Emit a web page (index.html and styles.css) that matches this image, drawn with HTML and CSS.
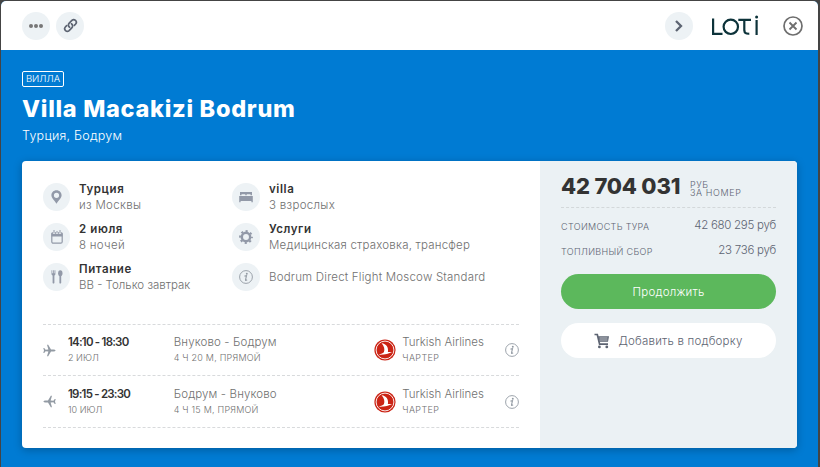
FILE: index.html
```
<!DOCTYPE html>
<html lang="ru">
  <head>
    <meta charset="utf-8" />
    <title>Villa Macakizi Bodrum</title>
    <link rel="stylesheet" href="styles.css">
  </head>

  <body>
    <svg class="sprite">
      <symbol id="info" viewBox="0 0 14 14">
        <circle cx="7" cy="7" r="6.4" fill="none" stroke="currentColor" stroke-width="0.9" />
        <circle cx="7.8" cy="3.7" r="0.95" fill="currentColor" />
        <path d="M5.5 6.1L7.5 5.7L6.5 10Q6.4 10.8 8.1 9.7" fill="none" stroke="currentColor" stroke-width="1.1" />
      </symbol>
      <symbol id="turkish" viewBox="0 0 22 22">
        <circle cx="11" cy="11" r="10.6" fill="#cb2415" />
        <circle cx="11" cy="11" r="8.9" fill="none" stroke="#fff" stroke-width="0.9" />
        <path d="M7.6 4.2C12.2 4.6 14.8 8.4 13.9 12.9L18.1 12.9C14.8 14.6 10.4 15.9 4.3 15.6C7.4 14.9 9.3 14 9.9 13.2C11 10.5 10.2 7 7.6 4.2Z" fill="#fff" />
      </symbol>
      <symbol id="plane" viewBox="0 0 13 13">
        <path d="M12.6 6.5Q12.4 5.6 10.5 5.6H8L5.2 0.8H4L5.4 5.6L2.6 5.7L1.2 4H0.3L1 6.5L0.3 9H1.2L2.6 7.3L5.4 7.4L4 12.2H5.2L8 7.4H10.5Q12.4 7.4 12.6 6.5Z" fill="currentColor" />
      </symbol>
    </svg>

    <div class="window">
      <div class="topbar">
        <div class="round dots"><i></i><i></i><i></i></div>
        <div class="round link">
          <svg width="15" height="15" viewBox="0 0 14 14" fill="none" stroke="#5d6472" stroke-width="1.6" stroke-linecap="round">
            <path d="M6.1 8.6C4.6 7.5 4.8 5.8 5.8 4.8L8.3 2.3C10.5 0.2 13.8 3.3 11.8 5.6L10.6 6.8" />
            <path d="M7.9 5.4C9.4 6.5 9.2 8.2 8.2 9.2L5.7 11.7C3.5 13.8 0.2 10.7 2.2 8.4L3.4 7.2" />
          </svg>
        </div>
        <div class="round next">
          <svg width="8" height="12" viewBox="0 0 8 12" fill="none" stroke="#5d6472" stroke-width="2.3">
            <path d="M1 1L6 6L1 11" />
          </svg>
        </div>
        <svg class="logo" width="48" height="22" viewBox="0 0 48 22" fill="none" stroke="#0d333a" stroke-width="2.2" role="img" aria-label="LOTI">
          <path d="M2.1 3.5V18.9H11.5" />
          <circle cx="19.8" cy="11.8" r="7.2" />
          <path d="M27.3 4.8H40M33.3 4.8V15.4Q33.5 19.2 38.3 18.7" />
          <path d="M45.6 5V20" />
          <circle cx="45.6" cy="1.9" r="1.5" fill="#0d333a" stroke="none" />
        </svg>
        <svg class="close" width="20" height="20" viewBox="0 0 20 20" fill="none" stroke="#6e6e6e" stroke-width="1.7">
          <circle cx="10" cy="10" r="9" />
          <path d="M6.5 6.5L13.5 13.5M13.5 6.5L6.5 13.5" stroke-width="1.8" />
        </svg>
      </div>

      <div class="hotel">
        <div class="tag">ВИЛЛА</div>
        <h1>Villa Macakizi Bodrum</h1>
        <div class="place">Турция, Бодрум</div>

        <div class="card">
          <div class="details">
            <div class="facts">
              <div class="fact">
                <div class="round">
                  <svg width="11" height="14" viewBox="0 0 11 14" fill="#9299a8">
                    <path fill-rule="evenodd" d="M5.5 0.3C8.4 0.3 10.6 2.5 10.6 5.2C10.6 8 7.6 10 5.5 13.7C3.4 10 0.4 8 0.4 5.2C0.4 2.5 2.6 0.3 5.5 0.3ZM5.5 2.7A2.6 2.6 0 1 0 5.5 7.9A2.6 2.6 0 1 0 5.5 2.7Z" />
                  </svg>
                </div>
                <div class="text"><b>Турция</b><span>из Москвы</span></div>
              </div>
              <div class="fact">
                <div class="round">
                  <svg width="14" height="12" viewBox="0 0 14 12" fill="#9299a8">
                    <path d="M1 1H13V4.3H11.5V3.2H7.7V4.3H6.3V3.2H2.5V4.3H1ZM0.2 5H13.8V11.2H12.4V10H1.6V11.2H0.2Z" />
                  </svg>
                </div>
                <div class="text"><b>villa</b><span>3 взрослых</span></div>
              </div>
              <div class="fact">
                <div class="round">
                  <svg width="12" height="14" viewBox="0 0 12 14">
                    <rect x="0.8" y="2.6" width="10.4" height="10.6" rx="1.5" fill="none" stroke="#9299a8" stroke-width="1.2" />
                    <path d="M0.5 3H11.5V6.6H0.5Z" fill="#9299a8" />
                    <path d="M3 0V4M6 1V4M9 0V4" stroke="#edf2f5" stroke-width="2.2" />
                    <path d="M3 0V3.5M6 1V3.5M9 0V3.5" stroke="#9299a8" stroke-width="1" />
                  </svg>
                </div>
                <div class="text"><b>2 июля</b><span>8 ночей</span></div>
              </div>
              <div class="fact">
                <div class="round">
                  <svg width="14" height="14" viewBox="0 0 14 14" fill="none" stroke="#9299a8">
                    <circle cx="7" cy="7" r="4.2" stroke-width="2.5" />
                    <circle cx="7" cy="7" r="6" stroke-width="1.8" stroke-dasharray="2.2 2.512" stroke-dashoffset="1.1" />
                  </svg>
                </div>
                <div class="text"><b>Услуги</b><span class="narrow">Медицинская страховка, трансфер</span></div>
              </div>
              <div class="fact">
                <div class="round">
                  <svg width="12" height="14" viewBox="0 0 12 14" fill="#9299a8">
                    <path d="M0.5 0.3H1.3V3.2H2V0.3H2.8V3.2H3.5V0.3H4.4V4Q4.4 5.2 3.4 5.6V13Q2.5 14 1.6 13V5.6Q0.5 5.2 0.5 4Z" />
                    <ellipse cx="9.3" cy="3.2" rx="2.2" ry="3" />
                    <path d="M8.4 5.5H10.2V13Q9.3 14 8.4 13Z" />
                  </svg>
                </div>
                <div class="text"><b>Питание</b><span class="meal">BB - Только завтрак</span></div>
              </div>
              <div class="fact">
                <div class="round"><svg class="info" width="14" height="14"><use href="#info" /></svg></div>
                <div class="text"><span class="narrow">Bodrum Direct Flight Moscow Standard</span></div>
              </div>
            </div>

            <div class="flights">
              <div class="flight">
                <svg class="plane" width="13" height="13"><use href="#plane" /></svg>
                <div class="text time"><b>14:10 - 18:30</b><small>2 ИЮЛ</small></div>
                <div class="text route"><span>Внуково - Бодрум</span><small>4 Ч 20 М, ПРЯМОЙ</small></div>
                <svg class="airline" width="22" height="22"><use href="#turkish" /></svg>
                <div class="text carrier"><span>Turkish Airlines</span><small>ЧАРТЕР</small></div>
                <svg class="info" width="14" height="14"><use href="#info" /></svg>
              </div>
              <div class="flight">
                <svg class="plane back" width="13" height="13"><use href="#plane" /></svg>
                <div class="text time"><b>19:15 - 23:30</b><small>10 ИЮЛ</small></div>
                <div class="text route"><span>Бодрум - Внуково</span><small>4 Ч 15 М, ПРЯМОЙ</small></div>
                <svg class="airline" width="22" height="22"><use href="#turkish" /></svg>
                <div class="text carrier"><span>Turkish Airlines</span><small>ЧАРТЕР</small></div>
                <svg class="info" width="14" height="14"><use href="#info" /></svg>
              </div>
            </div>
          </div>

          <div class="order">
            <div class="total">
              <strong>42 704 031</strong>
              <div class="unit">РУБ<br>ЗА НОМЕР</div>
            </div>
            <div class="price"><small>СТОИМОСТЬ ТУРА</small><span>42 680 295 руб</span></div>
            <div class="price"><small>ТОПЛИВНЫЙ СБОР</small><span>23 736 руб</span></div>
            <button class="btn green">Продолжить</button>
            <button class="btn white">
              <svg width="16" height="16" viewBox="0 0 16 16" fill="none" stroke="#5d6472">
                <path d="M0.5 1.5H3.3L5.6 11.2H14" stroke-width="1.7" />
                <path d="M4 3.3H15L14 8.8H5.2Z" fill="#5d6472" stroke="none" />
                <path d="M5.5 5H13.5M5.5 7H13.5" stroke="#fff" stroke-width="0.6" />
                <circle cx="5.4" cy="13.9" r="1.4" fill="#5d6472" stroke="none" />
                <circle cx="12.8" cy="13.9" r="1.4" fill="#5d6472" stroke="none" />
              </svg>
              Добавить в подборку
            </button>
          </div>
        </div>
      </div>
    </div>
  </body>
</html>
```
FILE: styles.css
```
* {
  box-sizing: border-box;
  margin: 0;
  padding: 0;
}

body {
  width: 820px;
  height: 467px;
  padding: 1px 2px 0 1px;
  overflow: hidden;
  background: #444;
  font-family: Inter, "Noto Sans", sans-serif;
  font-size: 11.5px;
  font-weight: 300;
  color: #5d6472;
}

svg {
  display: block;
  flex: none;
}

.sprite {
  display: none;
}

.window {
  height: 466px;
  border-radius: 5px 5px 0 0;
  overflow: hidden;
  background: #007bd3;
}

.topbar {
  display: flex;
  align-items: center;
  height: 49px;
  padding: 0 15px 0 21px;
  background: #fff;
}

.round {
  display: flex;
  align-items: center;
  justify-content: center;
  flex: none;
  width: 28px;
  height: 28px;
  border-radius: 50%;
  background: #edf2f5;
}

.dots {
  gap: 1px;
}

.dots i {
  width: 4px;
  height: 4px;
  border-radius: 50%;
  background: #777;
}

.link {
  margin-left: 6px;
}

.next {
  margin-left: auto;
}

.logo {
  margin-left: 18px;
}

.close {
  margin-left: 24px;
}

.hotel {
  padding: 21px 21px 0;
  color: #fff;
}

.tag {
  width: 42px;
  height: 16px;
  border: 1px solid #fff;
  border-radius: 2px;
  font-size: 9.5px;
  line-height: 14px;
  text-align: center;
}

h1 {
  margin-top: 8px;
  font-size: 23.5px;
  font-weight: 800;
  line-height: 28px;
  letter-spacing: 0.7px;
  white-space: nowrap;
}

.place {
  margin-top: 4px;
  font-size: 12.5px;
  line-height: 18px;
  letter-spacing: 0.25px;
}

.card {
  display: flex;
  width: 775px;
  height: 287px;
  margin-top: 16px;
  border-radius: 4px;
  overflow: hidden;
  background: #fff;
  box-shadow: 0 2px 8px rgba(0, 0, 0, 0.25);
  color: #5d6472;
}

.details {
  width: 518px;
  padding: 16px 21px 0;
}

.facts {
  display: grid;
  grid-template-columns: 189px 1fr;
  grid-auto-rows: 40px;
  height: 147px;
}

.fact {
  display: flex;
  align-items: center;
}

.fact .round {
  width: 27px;
  margin-right: 9px;
}

.fact:nth-child(even) .round {
  width: 28px;
}

.text {
  display: flex;
  flex-direction: column;
  line-height: 16px;
  white-space: nowrap;
  color: #707070;
}

.text b {
  font-weight: 600;
  color: #333;
}

.fact b {
  letter-spacing: 0.6px;
}

.fact span {
  letter-spacing: 0.3px;
}

.fact .narrow {
  letter-spacing: 0.2px;
}

.fact .meal {
  letter-spacing: 0;
}

small {
  font-size: 9px;
}

.info,
.plane {
  color: #929aa3;
}

.flight {
  display: flex;
  align-items: center;
  height: 51px;
  width: 476px;
  border-top: 1px dashed #d8dadc;
}

.flight:last-child {
  height: 53px;
  border-bottom: 1px dashed #d8dadc;
}

.back {
  transform: scaleX(-1);
}

.time {
  width: 106px;
  margin-left: 12px;
}

.time b {
  letter-spacing: -0.78px;
}

.route {
  width: 201px;
}

.route span {
  letter-spacing: 0.12px;
}

.route small {
  letter-spacing: 0.22px;
}

.carrier {
  width: 103px;
  margin-left: 6px;
}

.carrier small {
  letter-spacing: 0.4px;
}

.order {
  width: 257px;
  padding: 9px 21px 0;
  background: #ebf1f4;
}

.total {
  display: flex;
  align-items: center;
  height: 38px;
  border-bottom: 1px dashed #d3d8da;
}

.total strong {
  width: 129px;
  padding-bottom: 6px;
  font-size: 22px;
  font-weight: 800;
  line-height: 30px;
  letter-spacing: -0.2px;
  white-space: nowrap;
  color: #333;
}

.unit {
  font-size: 9px;
  line-height: 8px;
  letter-spacing: 0.6px;
  white-space: nowrap;
}

.price {
  display: flex;
  justify-content: space-between;
  align-items: center;
  height: 25px;
}

.price small {
  padding-top: 2px;
  letter-spacing: 0.35px;
}

.price span {
  padding-bottom: 2px;
  letter-spacing: -0.28px;
}

.total + .price {
  margin-top: 5px;
}

.btn {
  display: flex;
  align-items: center;
  justify-content: center;
  gap: 8px;
  width: 215px;
  height: 35px;
  border: 0;
  border-radius: 18px;
  font: inherit;
  letter-spacing: 0.2px;
  cursor: pointer;
}

.green {
  margin-top: 11px;
  background: #5cb85c;
  color: #fff;
}

.white {
  margin-top: 14px;
  background: #fff;
  color: #5d6472;
}
```
